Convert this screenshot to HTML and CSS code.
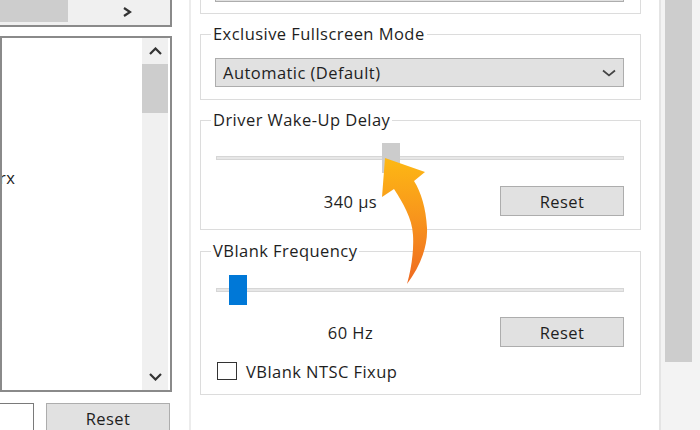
FILE: index.html
```html
<!DOCTYPE html>
<html lang="en">
<head>
<meta charset="utf-8">
<title>Settings</title>
<link rel="stylesheet" href="styles.css">
</head>
<body>
<div class="screen">
  <div class="left">
    <div class="hscroll">
      <div class="hthumb"></div>
      <div class="hspace"></div>
      <div class="harrow">
        <svg width="11" height="10" viewBox="0 0 11 10"><polyline points="2,1 8,5 2,9" fill="none" stroke="#333" stroke-width="2.2"/></svg>
      </div>
      <div class="hcorner"></div>
    </div>
    <div class="listbox">
      <div class="items">
        <div class="item item-first">rx</div>
        <div class="item item-second">t</div>
      </div>
      <div class="vscroll">
        <div class="varrow">
          <svg width="13" height="8" viewBox="0 0 13 8"><polyline points="1,7 6.5,1.5 12,7" fill="none" stroke="#333" stroke-width="2.2"/></svg>
        </div>
        <div class="vthumb"></div>
        <div class="vspace"></div>
        <div class="varrow">
          <svg width="13" height="8" viewBox="0 0 13 8"><polyline points="1,1 6.5,6.5 12,1" fill="none" stroke="#333" stroke-width="2.2"/></svg>
        </div>
      </div>
    </div>
    <div class="left-bottom">
      <div class="textbox"></div>
      <div class="btn">Reset</div>
    </div>
  </div>

  <div class="divider"></div>

  <div class="right">
    <div class="group-partial">
      <div class="prev-control"></div>
    </div>

    <fieldset class="group group-mode">
      <legend>Exclusive Fullscreen Mode</legend>
      <div class="combo">
        <span>Automatic (Default)</span>
        <svg width="14" height="8" viewBox="0 0 14 8"><polyline points="1,1.5 7,6.5 13,1.5" fill="none" stroke="#444" stroke-width="1.7"/></svg>
      </div>
    </fieldset>

    <fieldset class="group group-delay">
      <legend>Driver Wake-Up Delay</legend>
      <div class="slider">
        <div class="track"></div>
        <div class="thumb thumb-hover" style="left:167px"></div>
      </div>
      <div class="value-row">
        <div class="value">340 µs</div>
        <div class="btn">Reset</div>
      </div>
    </fieldset>

    <fieldset class="group group-vblank">
      <legend>VBlank Frequency</legend>
      <div class="slider">
        <div class="track"></div>
        <div class="thumb thumb-active" style="left:14px"></div>
      </div>
      <div class="value-row">
        <div class="value">60 Hz</div>
        <div class="btn">Reset</div>
      </div>
      <div class="check-row">
        <div class="checkbox"></div>
        <span>VBlank NTSC Fixup</span>
      </div>
    </fieldset>
  </div>

  <div class="rdivider"></div>
  <div class="rscroll">
    <div class="rthumb"></div>
  </div>

  <svg class="pointer-arrow" width="700" height="430" viewBox="0 0 700 430">
    <defs>
      <linearGradient id="arrowGrad" gradientUnits="userSpaceOnUse" x1="0" y1="160" x2="0" y2="285">
        <stop offset="0" stop-color="#fdb714"/>
        <stop offset="0.45" stop-color="#f8961c"/>
        <stop offset="1" stop-color="#ee6821"/>
      </linearGradient>
    </defs>
    <path d="M407 284 C419 268 428 248 427 228 C426 208 421 192 414 181 L425 172 L385 158 L382 197 L394 189 C403 203 412 218 413 235 C414 252 411 270 407 284 Z" fill="url(#arrowGrad)"/>
  </svg>
</div>
</body>
</html>
```

FILE: styles.css
```css
* { box-sizing: border-box; }

html, body {
  margin: 0;
  padding: 0;
  background: #ffffff;
}

body {
  font-family: "Open Sans", "Noto Sans", "DejaVu Sans", sans-serif;
  font-size: 16.5px;
  letter-spacing: 0.45px;
  color: #1e1e1e;
}

.screen {
  position: relative;
  width: 700px;
  height: 430px;
  overflow: hidden;
  display: flex;
  background: #ffffff;
}

/* ---------- left panel ---------- */
.left {
  width: 172px;
  flex: none;
  display: flex;
  flex-direction: column;
}

.left > * { flex: none; }

.hscroll {
  height: 27px;
  display: flex;
  background: #f0f0f0;
  border-right: 2px solid #8a8a8a;
  border-bottom: 2px solid #8a8a8a;
}

.hthumb {
  width: 68px;
  height: 22px;
  background: #cdcdcd;
}

.hspace { flex: 1; }

.harrow {
  width: 26px;
  display: flex;
  align-items: flex-start;
  justify-content: center;
  padding-top: 7px;
}

.hcorner { width: 30px; }

.listbox {
  margin-top: 9px;
  height: 356px;
  border: 2px solid #8a8a8a;
  background: #ffffff;
  display: flex;
}

.items {
  flex: 1;
  display: flex;
  flex-direction: column;
  overflow: hidden;
}

.item {
  height: 20px;
  line-height: 20px;
  color: #222;
}

.item-first {
  margin-top: 130px;
  margin-left: -3px;
}

.item-second {
  margin-top: 125px;
  margin-left: -6px;
}

.vscroll {
  width: 26px;
  margin-right: 2px;
  background: #f0f0f0;
  display: flex;
  flex-direction: column;
}

.varrow {
  height: 26px;
  display: flex;
  align-items: center;
  justify-content: center;
}

.vthumb {
  height: 49px;
  background: #cdcdcd;
}

.vspace { flex: 1; }

.left-bottom {
  margin-top: 11px;
  display: flex;
  gap: 12px;
}

.textbox {
  width: 36px;
  height: 32px;
  margin-left: -2px;
  border: 1px solid #7a7a7a;
  background: #fff;
}

.left-bottom .btn {
  width: 124px;
}

/* ---------- buttons ---------- */
.btn {
  height: 30px;
  background: #e1e1e1;
  border: 1px solid #adadad;
  display: flex;
  align-items: center;
  justify-content: center;
  color: #1e1e1e;
}

/* ---------- dividers ---------- */
.divider {
  width: 2px;
  margin-left: 17px;
  background: #ececec;
  flex: none;
}

.rdivider {
  width: 2px;
  margin-left: 18px;
  background: #e4e4e4;
  flex: none;
}

.rscroll {
  width: 39px;
  flex: none;
  background: #f3f3f3;
  padding-left: 4px;
}

.rthumb {
  width: 27px;
  height: 362px;
  background: #cdcdcd;
}

/* ---------- right panel ---------- */
.right {
  width: 441px;
  margin-left: 9px;
  flex: none;
  display: flex;
  flex-direction: column;
}

.right > * { flex: none; }

.group-partial {
  height: 14px;
  border: 1px solid #dcdcdc;
  border-top: none;
  padding: 0 16px 0 14px;
}

.prev-control {
  height: 2px;
  border: 1px solid #adadad;
  border-top: none;
  background: #e1e1e1;
}

.group {
  margin: 10px 0 0 0;
  border: 1px solid #dcdcdc;
  padding: 14px 16px 12px 14px;
  min-width: 0;
}

.group legend {
  margin-left: -4px;
  padding: 0 2px;
  line-height: 20px;
  height: 20px;
  color: #1e1e1e;
}

.combo {
  height: 29px;
  background: #e1e1e1;
  border: 1px solid #adadad;
  display: flex;
  align-items: center;
  justify-content: space-between;
  padding: 0 7px 0 7px;
}

.group-delay {
  padding-top: 13px;
  padding-bottom: 13px;
}

.group-vblank {
  margin-top: 11px;
  padding-top: 14px;
  padding-bottom: 13px;
}

.slider {
  position: relative;
  height: 30px;
}

.track {
  position: absolute;
  top: 13px;
  left: 1px;
  right: 0;
  height: 4px;
  background: #e7e7e7;
  border: 1px solid #d6d6d6;
}

.thumb {
  position: absolute;
  top: 0;
  width: 18px;
  height: 30px;
}

.thumb-hover { background: #cccccc; }
.thumb-active { background: #0078d7; }

.value-row {
  margin-top: 13px;
  display: grid;
  grid-template-columns: 1fr 124px;
  column-gap: 14px;
  align-items: center;
}

.group-vblank .value-row { margin-top: 12px; }

.value {
  text-align: center;
}

.check-row {
  margin-top: 14px;
  height: 20px;
  display: flex;
  align-items: center;
  gap: 9px;
}

.checkbox {
  width: 20px;
  height: 18px;
  margin-left: 2px;
  border: 1px solid #333;
  background: #fff;
}

/* ---------- overlay arrow ---------- */
.pointer-arrow {
  position: absolute;
  left: 0;
  top: 0;
  pointer-events: none;
}
```
